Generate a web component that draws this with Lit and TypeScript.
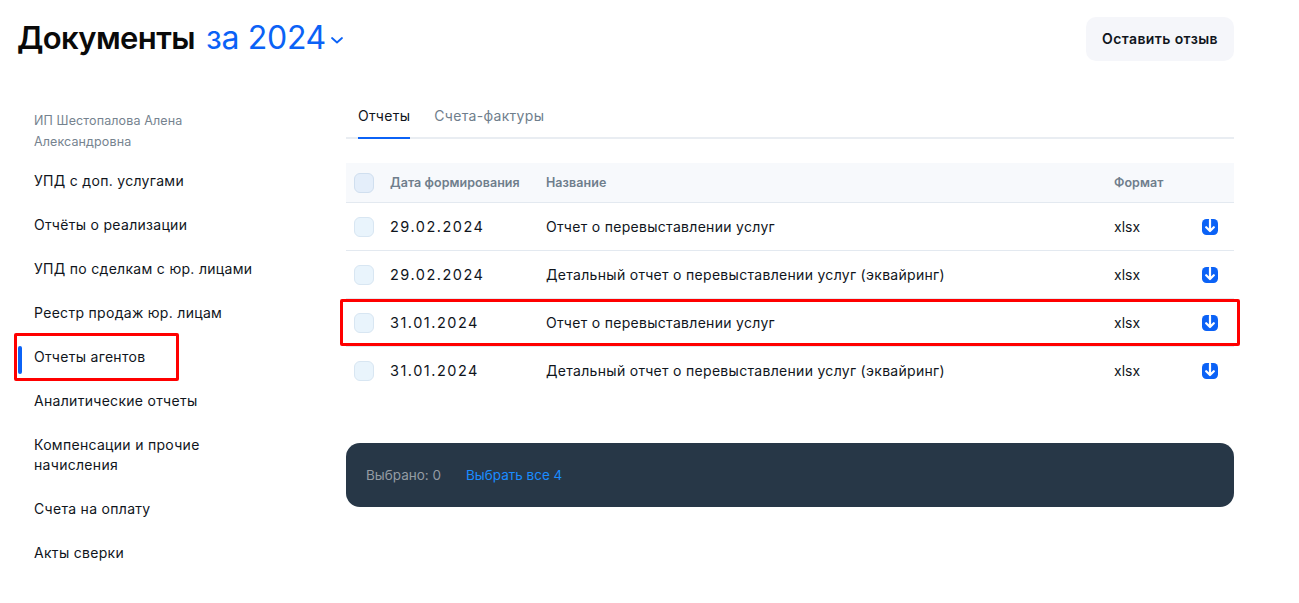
import { LitElement, html, css, svg } from "lit";
import { customElement } from "lit/decorators.js";

const NAV = [
  "УПД с доп. услугами",
  "Отчёты о реализации",
  "УПД по сделкам с юр. лицами",
  "Реестр продаж юр. лицам",
  "Отчеты агентов",
  "Аналитические отчеты",
  "Компенсации и прочие начисления",
  "Счета на оплату",
  "Акты сверки",
];
const ROWS = [
  ["29.02.2024", "Отчет о перевыставлении услуг"],
  ["29.02.2024", "Детальный отчет о перевыставлении услуг (эквайринг)"],
  ["31.01.2024", "Отчет о перевыставлении услуг"],
  ["31.01.2024", "Детальный отчет о перевыставлении услуг (эквайринг)"],
];

@customElement("app-root")
export class AppRoot extends LitElement {
  static styles = css`
    :host {
      display: block;
      position: relative;
      height: 603px;
      overflow: hidden;
      background: #fff;
      color: #10151c;
      font-family: Inter, "Noto Sans", sans-serif;
      font-size: 14px;
      letter-spacing: 0.3px;
    }
    .head {
      display: flex;
      justify-content: space-between;
      align-items: center;
      padding: 17px 65px 0 17px;
      height: 44px;
    }
    .title { display: flex; align-items: center; font-size: 32px; line-height: 44px; letter-spacing: -0.3px; margin-top: -2px; }
    .title b { font-size: 31px; letter-spacing: -0.6px; font-weight: 600; color: #0a0a0a; }
    .year { color: #0b62f6; margin-left: 11px; font-weight: 400; }
    .chev { width: 14px; height: 14px; margin-left: 4px; margin-top: 3px; }
    .btn {
      width: 148px; height: 44px; border-radius: 10px; background: #f5f6fa;
      display: flex; align-items: center; justify-content: center;
      font-weight: 600; letter-spacing: 0.4px; margin-top: -1px;
    }
    .body { display: flex; padding: 38px 65px 0 18px; }
    .side { width: 328px; flex: none; }
    .owner { padding: 11px 60px 0 16px; width: 190px; font-size: 12.5px; letter-spacing: 0.12px; line-height: 21px; color: #76838f; height: 49px; }
    .nav { display: flex; flex-direction: column; width: 252px; }
    .item { position: relative; padding: 10px 0 12px 16px; line-height: 20px; margin-top: 2px; }
    .item.on::before { content: ""; position: absolute; left: 0; top: 9px; width: 4px; height: 28px; border-radius: 2px; background: #0b62f6; }
    .main { flex: 1; min-width: 0; }
    .tabs { display: flex; gap: 24px; height: 38px; padding-left: 12px; border-bottom: 2px solid #e9edf2; }
    .tab { height: 38px; line-height: 34px; color: #6f7e8c; }
    .tab.on { color: #10151c; border-bottom: 2px solid #0b62f6; }
    .table { margin-top: 24px; }
    .row { display: grid; grid-template-columns: 36px 156px 568px 88px 1fr; align-items: center; height: 47px; border-bottom: 1px solid #e3e9f0; padding-left: 8px; }
    .row.hd { height: 39px; background: #f7f9fc; font-size: 12.5px; letter-spacing: 0.05px; font-weight: 600; color: #6f7e8c; }
    .row.last { border-bottom: none; }
    .date { font-size: 14.5px; letter-spacing: 1.5px; }
    .fmt { letter-spacing: 0; }
    .cb { width: 20px; height: 20px; box-sizing: border-box; border-radius: 6px; background: #e9f4fc; border: 1px solid #d8e6f2; }
    .hd .cb { background: #e4eefa; border-color: #d0dfef; }
    .dl { width: 16px; height: 16px; display: block; }
    .bar { margin-top: 49px; height: 64px; border-radius: 14px; background: #273747; display: flex; align-items: center; padding-left: 20px; gap: 25px; font-size: 13.5px; letter-spacing: 0; }
    .bar .cnt { color: #949ba3; }
    .bar .all { color: #1a8cff; }
    .mark { position: absolute; border: 3px solid #ff0000; border-radius: 2px; box-sizing: border-box; pointer-events: none; }
    .m1 { left: 14px; top: 333px; width: 165px; height: 48px; }
    .m2 { left: 340px; top: 299px; width: 900px; height: 47px; }
  `;

  private dl() {
    return svg`<svg class="dl" viewBox="0 0 16 16"><rect width="16" height="16" rx="4.5" fill="#0b62f6"/><path d="M8 1v10.5M4.2 8.2 8 12l3.8-3.8" fill="none" stroke="#fff" stroke-width="2.2" stroke-linecap="round" stroke-linejoin="round"/></svg>`;
  }

  render() {
    return html`
      <div class="head">
        <div class="title">
          <b>Документы</b><span class="year">за 2024</span>
          <svg class="chev" viewBox="0 0 14 14"><path d="M2 5l5 4.5L12 5" fill="none" stroke="#0b62f6" stroke-width="1.8" stroke-linecap="round" stroke-linejoin="round"/></svg>
        </div>
        <div class="btn">Оставить отзыв</div>
      </div>
      <div class="body">
        <div class="side">
          <div class="owner">ИП Шестопалова Алена Александровна</div>
          <div class="nav">
            ${NAV.map((n) => html`<div class="item ${n === "Отчеты агентов" ? "on" : ""}">${n}</div>`)}
          </div>
        </div>
        <div class="main">
          <div class="tabs">
            <div class="tab on">Отчеты</div>
            <div class="tab">Счета-фактуры</div>
          </div>
          <div class="table">
            <div class="row hd">
              <div class="cb"></div><div>Дата формирования</div><div>Название</div><div>Формат</div><div></div>
            </div>
            ${ROWS.map((r, i) => html`
              <div class="row ${i === 3 ? "last" : ""}">
                <div class="cb"></div><div class="date">${r[0]}</div><div>${r[1]}</div><div class="fmt">xlsx</div><div>${this.dl()}</div>
              </div>`)}
          </div>
          <div class="bar">
            <span class="cnt">Выбрано: 0</span><span class="all">Выбрать все 4</span>
          </div>
        </div>
      </div>
      <div class="mark m1"></div>
      <div class="mark m2"></div>
    `;
  }
}
